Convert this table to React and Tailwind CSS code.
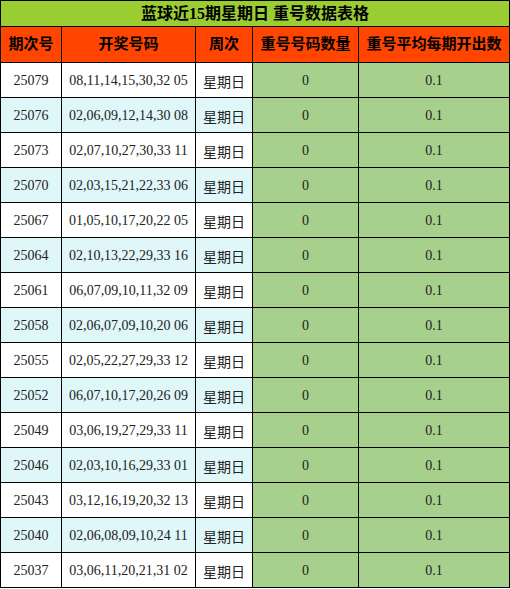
import React from "react";

const rows = [
  ["25079", "08,11,14,15,30,32 05"],
  ["25076", "02,06,09,12,14,30 08"],
  ["25073", "02,07,10,27,30,33 11"],
  ["25070", "02,03,15,21,22,33 06"],
  ["25067", "01,05,10,17,20,22 05"],
  ["25064", "02,10,13,22,29,33 16"],
  ["25061", "06,07,09,10,11,32 09"],
  ["25058", "02,06,07,09,10,20 06"],
  ["25055", "02,05,22,27,29,33 12"],
  ["25052", "06,07,10,17,20,26 09"],
  ["25049", "03,06,19,27,29,33 11"],
  ["25046", "02,03,10,16,29,33 01"],
  ["25043", "03,12,16,19,20,32 13"],
  ["25040", "02,06,08,09,10,24 11"],
  ["25037", "03,06,11,20,21,31 02"],
];

const serif = { fontFamily: '"Liberation Serif", "Noto Sans CJK SC", serif' };

const App = () => {
  return (
    <div className="w-[510px] h-[589px] bg-white">
      <table
        className="table-fixed border-collapse w-[509px] text-black"
        style={serif}
      >
        <colgroup>
          <col className="w-[61px]" />
          <col className="w-[134px]" />
          <col className="w-[57px]" />
          <col className="w-[106px]" />
          <col className="w-[151px]" />
        </colgroup>
        <thead>
          <tr className="h-[26px]">
            <th
              colSpan={5}
              className="bg-[#9acd32] border border-black text-[16px] font-bold text-center p-0 leading-none"
            >
              蓝球近15期星期日 重号数据表格
            </th>
          </tr>
          <tr className="h-[36px] bg-[#ff4500]">
            <th className="border border-black text-[15px] font-bold p-0">期次号</th>
            <th className="border border-black text-[15px] font-bold p-0">开奖号码</th>
            <th className="border border-black text-[15px] font-bold p-0">周次</th>
            <th className="border border-black text-[15px] font-bold p-0">重号号码数量</th>
            <th className="border border-black text-[15px] font-bold p-0">重号平均每期开出数</th>
          </tr>
        </thead>
        <tbody>
          {rows.map(([no, nums], i) => (
            <tr key={no} className={`h-[35px] ${i % 2 === 1 ? "bg-[#e0f7fa]" : "bg-white"}`}>
              <td className="border border-black text-center text-[14px] p-0 text-[#222]">{no}</td>
              <td className="border border-black text-center text-[14px] p-0 text-[#222] whitespace-nowrap">{nums}</td>
              <td className="border border-black text-center text-[14px] p-0 pt-[4px] text-[#222]">星期日</td>
              <td className="border border-black text-center text-[14px] p-0 bg-[#a8d08d] text-[#222]">0</td>
              <td className="border border-black text-center text-[14px] p-0 bg-[#a8d08d] text-[#222]">0.1</td>
            </tr>
          ))}
        </tbody>
      </table>
    </div>
  );
};

export default App;
